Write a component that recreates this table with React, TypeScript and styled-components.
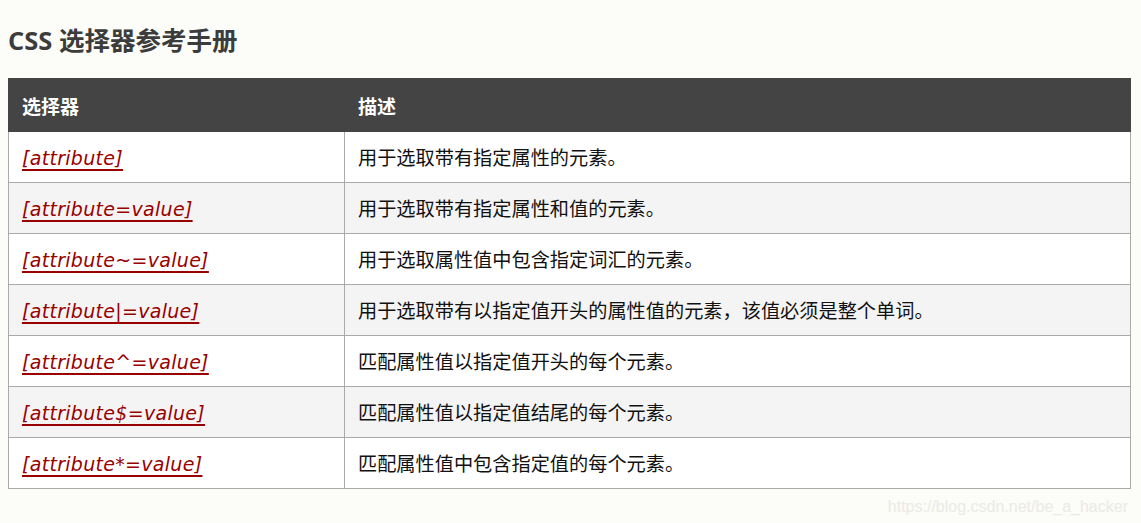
import React from 'react';
import styled, { createGlobalStyle } from 'styled-components';

const GlobalStyle = createGlobalStyle`
  html, body {
    margin: 0;
    padding: 0;
    background: #fcfcf8;
  }
  body {
    font-family: "DejaVu Sans", "Noto Sans CJK SC", sans-serif;
  }
`;

const Page = styled.div`
  position: relative;
  width: 1141px;
  height: 523px;
  padding: 22px 10px 0 8px;
  box-sizing: border-box;
`;

const Title = styled.h2`
  margin: 0 0 20px;
  font-family: "Open Sans", "Noto Sans CJK SC", sans-serif;
  font-size: 25.5px;
  font-weight: 700;
  line-height: 36px;
  color: #3c3c3c;
`;

const Table = styled.table`
  width: 1123px;
  border-collapse: collapse;
  border: 1px solid #aaa;
`;

const HeadCell = styled.th<{ $w?: number }>`
  background: #444;
  color: #fff;
  text-align: left;
  font-family: "Noto Sans CJK SC", sans-serif;
  font-weight: 700;
  font-size: 19px;
  height: 53px;
  padding: 0 13px;
  box-sizing: border-box;
  border: 1px solid #444;
  width: ${({ $w }) => ($w ? `${$w}px` : 'auto')};
`;

const Row = styled.tr<{ $alt: boolean }>`
  background: ${({ $alt }) => ($alt ? '#f4f4f4' : '#fff')};
`;

const Cell = styled.td`
  height: 51px;
  padding: 0 13px 0 13px;
  box-sizing: border-box;
  border: 1px solid #aaa;
  vertical-align: middle;
  color: #111;
  font-family: "Noto Sans CJK SC", sans-serif;
  font-size: 19.2px;
`;

const SelectorLink = styled.a`
  font-family: "DejaVu Sans", Verdana, sans-serif;
  font-style: oblique;
  font-size: 19px;
  letter-spacing: 0.3px;
  color: #900;
  text-decoration: underline;
  text-decoration-thickness: 1.5px;
  text-underline-offset: 4px;
`;

const Watermark = styled.div`
  position: absolute;
  right: 13px;
  bottom: 7px;
  font-family: "Liberation Sans", Arial, sans-serif;
  font-size: 16px;
  color: #eaeae6;
`;

const rows = [
  ['[attribute]', '用于选取带有指定属性的元素。'],
  ['[attribute=value]', '用于选取带有指定属性和值的元素。'],
  ['[attribute~=value]', '用于选取属性值中包含指定词汇的元素。'],
  ['[attribute|=value]', '用于选取带有以指定值开头的属性值的元素，该值必须是整个单词。'],
  ['[attribute^=value]', '匹配属性值以指定值开头的每个元素。'],
  ['[attribute$=value]', '匹配属性值以指定值结尾的每个元素。'],
  ['[attribute*=value]', '匹配属性值中包含指定值的每个元素。'],
];

export default function App() {
  return (
    <>
      <GlobalStyle />
      <Page>
        <Title>CSS 选择器参考手册</Title>
        <Table>
          <thead>
            <tr>
              <HeadCell $w={336}>选择器</HeadCell>
              <HeadCell>描述</HeadCell>
            </tr>
          </thead>
          <tbody>
            {rows.map(([sel, desc], i) => (
              <Row key={sel} $alt={i % 2 === 1}>
                <Cell>
                  <SelectorLink href="#">{sel}</SelectorLink>
                </Cell>
                <Cell>{desc}</Cell>
              </Row>
            ))}
          </tbody>
        </Table>
        <Watermark>https://blog.csdn.net/be_a_hacker</Watermark>
      </Page>
    </>
  );
}
